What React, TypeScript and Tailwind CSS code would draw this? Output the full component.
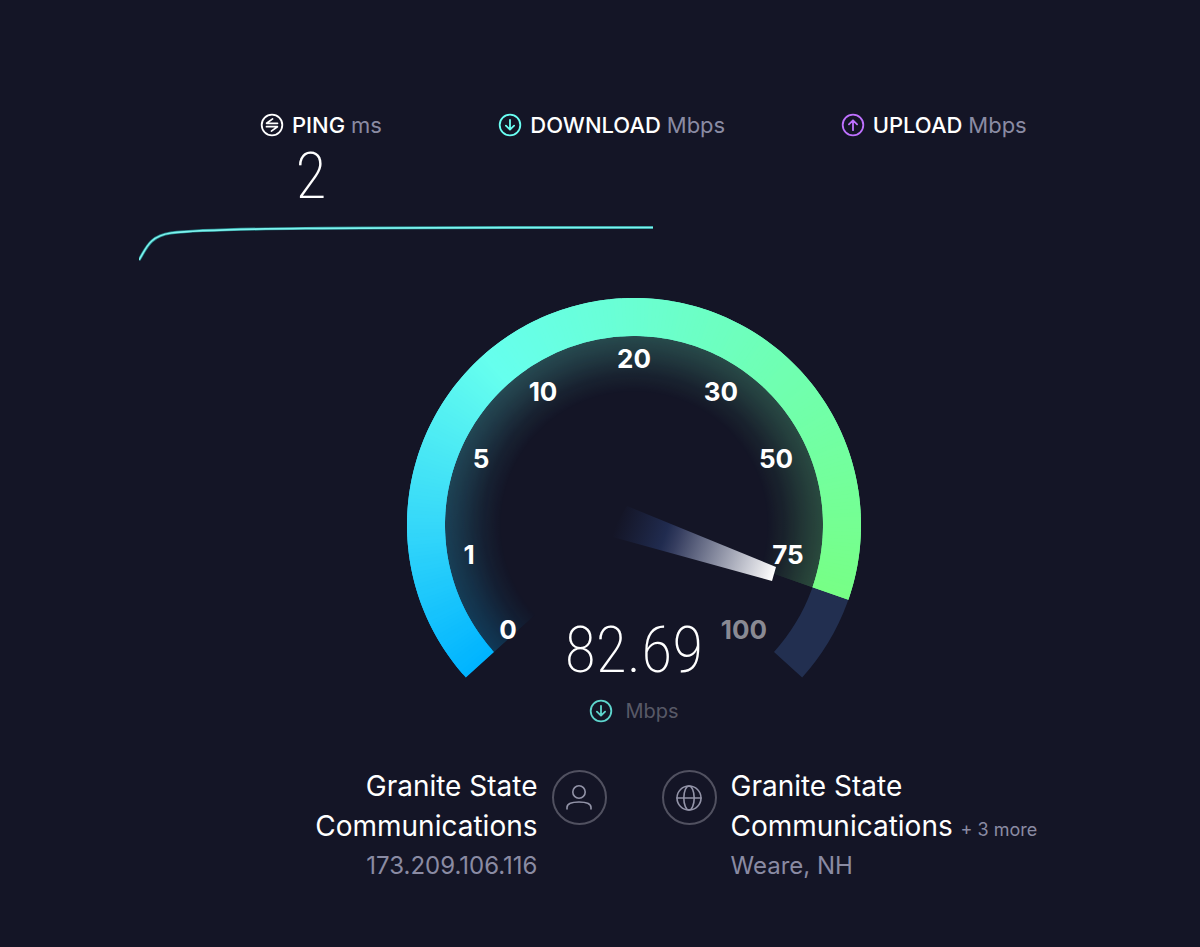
import type { ReactNode } from "react"

const CENTER = 228
const OUTER = 227
const INNER = 189
const START_ANGLE = 137.8
const TOTAL_SWEEP = 264.4
const VALUE_SWEEP = 241.4

const NUMERALS = "font-['Roboto_Condensed','Liberation_Sans_Narrow',Roboto,sans-serif]"

// Colour stops along the arc, in degrees from the start of the dial
const stops: { at: number; rgb: [number, number, number] }[] = [
  { at: 0, rgb: [0, 180, 255] },
  { at: 42, rgb: [54, 216, 249] },
  { at: 90, rgb: [102, 255, 238] },
  { at: 132, rgb: [106, 255, 210] },
  { at: 178, rgb: [112, 255, 176] },
  { at: 242, rgb: [119, 255, 133] },
]

const labels = [
  { text: "0", x: 102, y: 342 },
  { text: "1", x: 63, y: 267 },
  { text: "5", x: 75, y: 171 },
  { text: "10", x: 137, y: 104 },
  { text: "20", x: 228, y: 71 },
  { text: "30", x: 315, y: 104 },
  { text: "50", x: 370, y: 171 },
  { text: "75", x: 382, y: 267 },
  { text: "100", x: 338, y: 342, dim: true },
]

function colorAt(angle: number) {
  const next = Math.max(1, stops.findIndex((s) => s.at >= angle))
  const a = stops[next - 1]
  const b = stops[next]
  const t = (angle - a.at) / (b.at - a.at)
  const [r, g, bl] = a.rgb.map((c, i) => Math.round(c + (b.rgb[i] - c) * t))
  return `rgb(${r}, ${g}, ${bl})`
}

function point(radius: number, angle: number) {
  const rad = ((START_ANGLE + angle) * Math.PI) / 180
  return `${(CENTER + radius * Math.cos(rad)).toFixed(2)} ${(CENTER + radius * Math.sin(rad)).toFixed(2)}`
}

function ringPath(from: number, to: number, inner: number, outer: number) {
  const large = to - from > 180 ? 1 : 0
  return `M${point(outer, from)} A${outer} ${outer} 0 ${large} 1 ${point(outer, to)} L${point(inner, to)} A${inner} ${inner} 0 ${large} 0 ${point(inner, from)} Z`
}

const segments = Array.from({ length: Math.ceil(VALUE_SWEEP) }, (_, i) => ({
  from: i,
  to: Math.min(i + 2, VALUE_SWEEP),
  color: colorAt(i),
}))

function Gauge() {
  return (
    <svg viewBox="0 0 456 382" className="col-start-1 row-start-1 w-full" role="img" aria-label="Download speed dial">
      <defs>
        <radialGradient id="glow" gradientUnits="userSpaceOnUse" cx={CENTER} cy={CENTER} r={INNER}>
          <stop offset="0.7" stopColor="#fff" stopOpacity="0" />
          <stop offset="0.8" stopColor="#fff" stopOpacity="0.06" />
          <stop offset="0.9" stopColor="#fff" stopOpacity="0.15" />
          <stop offset="1" stopColor="#fff" stopOpacity="0.23" />
        </radialGradient>
        <mask id="glowMask" maskUnits="userSpaceOnUse" x="0" y="0" width="456" height="456">
          <rect width="456" height="456" fill="url(#glow)" />
        </mask>
        <linearGradient id="needle" gradientUnits="userSpaceOnUse" x1="212" y1="222" x2="368" y2="277">
          <stop offset="0" stopColor="#1f2b50" stopOpacity="0" />
          <stop offset="0.3" stopColor="#222e54" stopOpacity="0.9" />
          <stop offset="0.38" stopColor="#363e60" />
          <stop offset="0.95" stopColor="#ededf0" />
          <stop offset="1" stopColor="#fff" />
        </linearGradient>
      </defs>

      <path d={ringPath(0, TOTAL_SWEEP, INNER, OUTER)} fill="#222f50" />
      <g mask="url(#glowMask)">
        {segments.map((s) => (
          <path key={s.from} d={ringPath(s.from, s.to, 110, INNER)} fill={s.color} />
        ))}
      </g>
      {segments.map((s) => (
        <path key={s.from} d={ringPath(s.from, s.to, INNER, OUTER)} fill={s.color} />
      ))}

      {labels.map((l) => (
        <text
          key={l.text}
          x={l.x}
          y={l.y}
          textAnchor="middle"
          className={l.dim ? "fill-[#8a8a93] text-[26px] font-bold" : "fill-white text-[26px] font-bold"}
        >
          {l.text}
        </text>
      ))}
      <path d="M221 209 L370 270 L366 284 L203 239 Z" fill="url(#needle)" />
    </svg>
  )
}

function CircleIcon({ children, className }: { children: ReactNode; className: string }) {
  return (
    <svg
      viewBox="0 0 24 24"
      fill="none"
      stroke="currentColor"
      strokeWidth="1.8"
      strokeLinecap="round"
      strokeLinejoin="round"
      className={`size-6 shrink-0 ${className}`}
      aria-hidden="true"
    >
      <circle cx="12" cy="12" r="10.3" />
      {children}
    </svg>
  )
}

function DownIcon({ className }: { className: string }) {
  return (
    <CircleIcon className={className}>
      <path d="M12 6.800v9.800M7.900 12.700l4.100 4 4.100-4" />
    </CircleIcon>
  )
}

function Metric({ icon, name, unit, value }: { icon: ReactNode; name: string; unit: string; value?: string }) {
  return (
    <div>
      <h2 className="flex items-center gap-2 text-[22px] leading-6 font-medium whitespace-nowrap">
        {icon}
        <span>
          {name} <span className="font-normal text-[#8a8ba3]">{unit}</span>
        </span>
      </h2>
      {value && (
        <p className={`mt-3 w-[102px] text-center text-[64px] leading-[56px] font-extralight ${NUMERALS}`}>{value}</p>
      )}
    </div>
  )
}

function RoundBadge({ children }: { children: ReactNode }) {
  return (
    <div className="mt-1 flex size-[55px] shrink-0 items-center justify-center rounded-full border-2 border-[#515160] text-[#9394a8]">
      <svg
        viewBox="0 0 28 28"
        fill="none"
        stroke="currentColor"
        strokeWidth="1.6"
        strokeLinecap="round"
        className="size-7"
        aria-hidden="true"
      >
        {children}
      </svg>
    </div>
  )
}

export default function App() {
  return (
    <main className="min-h-screen bg-[#141526] pt-[113px] pb-16 pl-[68px] font-[Inter,sans-serif] text-white">
      <div className="mx-auto w-full max-w-[990px]">
        <section className="grid h-[107px] grid-cols-[238fr_342fr_288fr] pl-[121px]">
          <Metric
            name="PING"
            unit="ms"
            value="2"
            icon={
              <CircleIcon className="text-white">
                <path d="M17.500 10.300H6.600L12.600 5.900M6.500 13.700h10.900L11.400 18.100" strokeWidth="1.700" />
              </CircleIcon>
            }
          />
          <Metric name="DOWNLOAD" unit="Mbps" icon={<DownIcon className="text-[#6afff3]" />} />
          <Metric
            name="UPLOAD"
            unit="Mbps"
            icon={
              <CircleIcon className="text-[#bf71ff]">
                <path d="M12 17.200V7.400M7.900 11.300l4.100-4 4.100 4" />
              </CircleIcon>
            }
          />
        </section>

        <svg viewBox="0 0 990 44" className="w-full" fill="none" role="img" aria-label="Download speed over time">
          <path d="M0 40C7 29 10 16 32 13C72 8 190 7.500 514 7.500" stroke="#2a8f92" strokeWidth="3" />
          <path d="M0 40C7 29 10 16 32 13C72 8 190 7.500 514 7.500" stroke="#7df3ee" strokeWidth="1.6" />
        </svg>

        <section className="mx-auto mt-[33px] max-w-[456px]">
          <div className="grid">
            <Gauge />
            <p
              className={`col-start-1 row-start-1 self-end text-center text-[64px] leading-[56px] font-extralight ${NUMERALS}`}
            >
              82.69
            </p>
          </div>
          <p className="mt-5 flex items-center justify-center gap-3 text-xl leading-6 text-[#585966]">
            <DownIcon className="text-[#5ed5cd]" />
            Mbps
          </p>
        </section>

        <section className="mt-[43px] grid grid-cols-2 gap-[55px] text-[28px] leading-10">
          <div className="flex justify-end gap-3.5">
            <div className="text-right">
              <p>
                Granite State
                <br />
                Communications
              </p>
              <p className="text-2xl leading-10 text-[#8a8ba3]">173.209.106.116</p>
            </div>
            <RoundBadge>
              <circle cx="14" cy="8" r="6.200" />
              <path d="M2 25v-1.500c0-3.500 4-5.500 12-5.500s12 2 12 5.500V25" />
            </RoundBadge>
          </div>
          <div className="flex gap-3.5">
            <RoundBadge>
              <circle cx="14" cy="14" r="12" />
              <ellipse cx="14" cy="14" rx="5.200" ry="12" />
              <path d="M2 14h24" />
            </RoundBadge>
            <div>
              <p>
                Granite State
                <br />
                Communications <span className="text-lg text-[#8a8ba3]">+ 3 more</span>
              </p>
              <p className="text-2xl leading-10 text-[#8a8ba3]">Weare, NH</p>
            </div>
          </div>
        </section>
      </div>
    </main>
  )
}
